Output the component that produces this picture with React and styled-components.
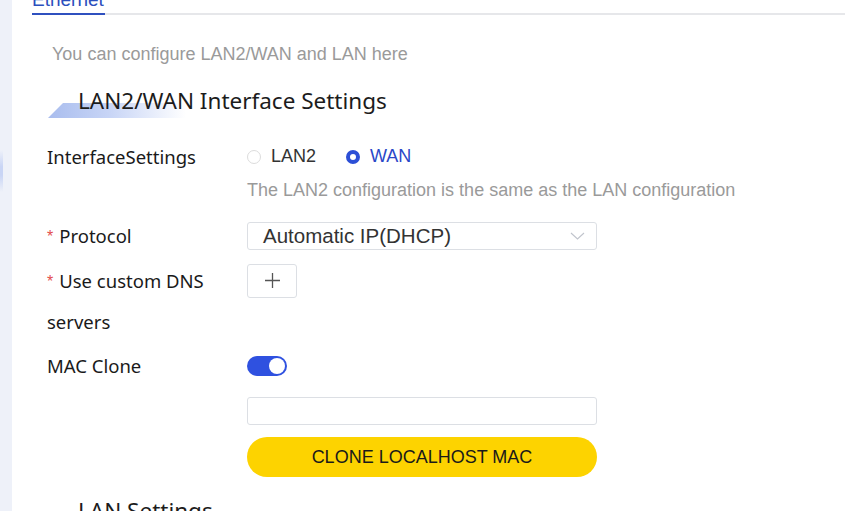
import React, { useState } from 'react';
import styled, { createGlobalStyle } from 'styled-components';

const GlobalStyle = createGlobalStyle`
    html, body {
        margin: 0;
        padding: 0;
        background: #ffffff;
        overflow: hidden;
    }
    * {
        box-sizing: border-box;
    }
`;

const labelFont = `"Noto Sans", "Open Sans", sans-serif`;
const bodyFont = `"Liberation Sans", Arial, sans-serif`;

const Styled = {
    Page: styled.div`
        display: flex;
        width: 845px;
        height: 511px;
        overflow: hidden;
    `,

    SideStrip: styled.div`
        width: 12px;
        flex-shrink: 0;
        background: #eef1f9;
        position: relative;

        &::after {
            content: '';
            position: absolute;
            left: 0;
            top: 150px;
            width: 3px;
            height: 42px;
            background: linear-gradient(180deg, #eef1f9, #c9d5f5 40%, #c9d5f5 60%, #eef1f9);
        }
    `,

    Main: styled.div`
        flex: 1;
        background: #ffffff;
        padding-left: 20px;
    `,

    TabBar: styled.div`
        display: flex;
        height: 25px;
        border-bottom: 2px solid #e6e7ea;
        margin-top: -10px;
    `,

    Tab: styled.div`
        width: 73px;
        height: 25px;
        font-family: ${bodyFont};
        font-size: 19px;
        line-height: 19px;
        color: #2b4fbd;
        border-bottom: 2px solid #2f50bf;
        white-space: nowrap;
        overflow: hidden;
    `,

    Content: styled.div`
        padding-left: 15px;
    `,

    Description: styled.div`
        margin-top: 28px;
        padding-left: 5px;
        font-family: ${bodyFont};
        font-size: 18px;
        line-height: 22px;
        color: #9a9a9a;
    `,

    Heading: styled.div`
        position: relative;
        margin-top: 21px;
        padding-left: 31px;
        font-family: ${labelFont};
        font-size: 22.5px;
        line-height: 30px;
        color: #1c1c1c;

        &::before {
            content: '';
            position: absolute;
            left: 1px;
            top: 17px;
            width: 138px;
            height: 15px;
            background: linear-gradient(90deg, #a9bdee 0%, #c8d5f6 45%, rgba(255, 255, 255, 0) 100%);
            clip-path: polygon(15px 0, 100% 0, 100% 100%, 0 100%);
            z-index: 0;
        }

        span {
            position: relative;
            z-index: 1;
        }
    `,

    Form: styled.div`
        margin-top: 20px;
    `,

    Row: styled.div`
        display: grid;
        grid-template-columns: 200px 350px;
        margin-bottom: ${({ gap }) => gap ?? 4}px;
    `,

    Label: styled.div`
        font-family: ${labelFont};
        font-size: 18.5px;
        line-height: 41px;
        color: #1a1a1a;
        width: 175px;
    `,

    Required: styled.span`
        position: relative;
        top: -1px;
        color: #e34d4d;
        font-family: ${bodyFont};
        font-size: 16px;
        line-height: 1;
        margin-right: 6px;
    `,

    Control: styled.div`
        display: flex;
        flex-direction: column;
        align-items: flex-start;
    `,

    Line: styled.div`
        display: flex;
        align-items: center;
        height: 41px;
        width: 100%;
    `,

    RadioGroup: styled.div`
        display: flex;
        align-items: center;
        gap: 30px;
    `,

    RadioOption: styled.label`
        display: flex;
        align-items: center;
        gap: 10px;
        font-family: ${bodyFont};
        font-size: 18px;
        color: ${({ checked }) => (checked ? '#2a47c8' : '#333333')};
        cursor: pointer;
    `,

    RadioDot: styled.span`
        width: 14px;
        height: 14px;
        border-radius: 50%;
        border: ${({ checked }) => (checked ? '4px solid #2c4fd6' : '1px solid #dcdcdc')};
        background: #ffffff;
    `,

    Hint: styled.div`
        font-family: ${bodyFont};
        font-size: 18px;
        line-height: 26px;
        color: #9a9a9a;
        white-space: nowrap;
        margin-bottom: 8px;
    `,

    Select: styled.div`
        width: 350px;
        height: 28px;
        border: 1px solid #dcdfe4;
        border-radius: 3px;
        display: flex;
        align-items: center;
        justify-content: space-between;
        padding: 0 11px 0 15px;
        font-family: ${bodyFont};
        font-size: 20.5px;
        color: #333333;
    `,

    AddButton: styled.button`
        width: 50px;
        height: 34px;
        border: 1px solid #dcdfe4;
        border-radius: 3px;
        background: #ffffff;
        display: flex;
        align-items: center;
        justify-content: center;
        padding: 0;
        cursor: pointer;
    `,

    Switch: styled.button`
        position: relative;
        width: 40px;
        height: 20px;
        border-radius: 10px;
        border: none;
        padding: 0;
        background: ${({ on }) => (on ? '#2f51e0' : '#c4c4c4')};
        cursor: pointer;

        &::after {
            content: '';
            position: absolute;
            top: 2px;
            left: ${({ on }) => (on ? '22px' : '2px')};
            width: 16px;
            height: 16px;
            border-radius: 50%;
            background: #ffffff;
        }
    `,

    Input: styled.input`
        width: 350px;
        height: 28px;
        margin-top: 11px;
        border: 1px solid #dcdfe4;
        border-radius: 3px;
        outline: none;
        padding: 0 10px;
        font-family: ${bodyFont};
        font-size: 16px;
    `,

    CloneButton: styled.button`
        width: 350px;
        height: 40px;
        margin-top: 12px;
        border: none;
        border-radius: 20px;
        background: #fdd300;
        font-family: ${bodyFont};
        font-size: 18px;
        color: #1a1a1a;
        cursor: pointer;
    `,

    SubHeading: styled.div`
        margin-top: 19px;
        padding-left: 31px;
        font-family: ${labelFont};
        font-size: 22.5px;
        line-height: 30px;
        color: #1c1c1c;
    `,
};

function Chevron() {
    return (
        <svg width="15" height="8" viewBox="0 0 15 8" fill="none">
            <path d="M1 1l6.5 6 6.5-6" stroke="#c0c4cc" strokeWidth="1.1" />
        </svg>
    );
}

function Plus() {
    return (
        <svg width="15" height="15" viewBox="0 0 15 15" fill="none">
            <path d="M7.5 0v15M0 7.5h15" stroke="#555" strokeWidth="1.3" />
        </svg>
    );
}

function App() {
    const [mode, setMode] = useState('WAN');
    const [macClone, setMacClone] = useState(true);

    return (
        <>
            <GlobalStyle />
            <Styled.Page>
                <Styled.SideStrip />
                <Styled.Main>
                    <Styled.TabBar>
                        <Styled.Tab>Ethernet</Styled.Tab>
                    </Styled.TabBar>
                    <Styled.Content>
                        <Styled.Description>You can configure LAN2/WAN and LAN here</Styled.Description>
                        <Styled.Heading><span>LAN2/WAN Interface Settings</span></Styled.Heading>

                        <Styled.Form>
                            <Styled.Row>
                                <Styled.Label>InterfaceSettings</Styled.Label>
                                <Styled.Control>
                                    <Styled.Line>
                                        <Styled.RadioGroup>
                                            {['LAN2', 'WAN'].map((opt) => (
                                                <Styled.RadioOption
                                                    key={opt}
                                                    checked={mode === opt}
                                                    onClick={() => setMode(opt)}
                                                >
                                                    <Styled.RadioDot checked={mode === opt} />
                                                    {opt}
                                                </Styled.RadioOption>
                                            ))}
                                        </Styled.RadioGroup>
                                    </Styled.Line>
                                    <Styled.Hint>The LAN2 configuration is the same as the LAN configuration</Styled.Hint>
                                </Styled.Control>
                            </Styled.Row>

                            <Styled.Row>
                                <Styled.Label><Styled.Required>*</Styled.Required>Protocol</Styled.Label>
                                <Styled.Control>
                                    <Styled.Line>
                                        <Styled.Select>
                                            Automatic IP(DHCP)
                                            <Chevron />
                                        </Styled.Select>
                                    </Styled.Line>
                                </Styled.Control>
                            </Styled.Row>

                            <Styled.Row gap={3}>
                                <Styled.Label><Styled.Required>*</Styled.Required>Use custom DNS servers</Styled.Label>
                                <Styled.Control>
                                    <Styled.Line>
                                        <Styled.AddButton><Plus /></Styled.AddButton>
                                    </Styled.Line>
                                </Styled.Control>
                            </Styled.Row>

                            <Styled.Row>
                                <Styled.Label>MAC Clone</Styled.Label>
                                <Styled.Control>
                                    <Styled.Line>
                                        <Styled.Switch on={macClone} onClick={() => setMacClone(!macClone)} />
                                    </Styled.Line>
                                    <Styled.Input />
                                    <Styled.CloneButton>CLONE LOCALHOST MAC</Styled.CloneButton>
                                </Styled.Control>
                            </Styled.Row>
                        </Styled.Form>

                        <Styled.SubHeading>LAN Settings</Styled.SubHeading>
                    </Styled.Content>
                </Styled.Main>
            </Styled.Page>
        </>
    );
}

export default App;
